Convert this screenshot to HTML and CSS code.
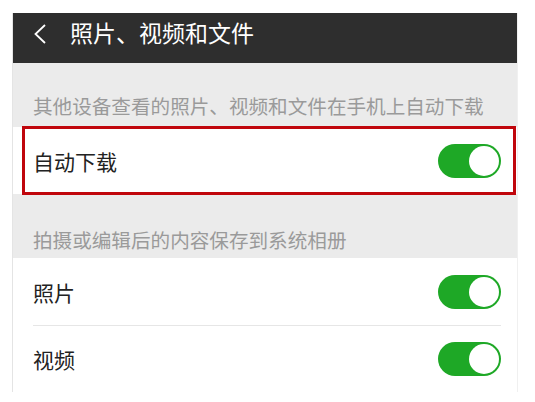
FILE: index.html
```html
<!DOCTYPE html>
<html lang="zh-CN">
<head>
    <meta charset="UTF-8">
    <title>照片、视频和文件</title>
    <link rel="stylesheet" href="styles.css">
</head>
<body>
<div class="screen">
    <div class="header">
        <span class="back">
            <svg width="14" height="20" viewBox="0 0 14 20">
                <polyline points="12,1 2.5,10 12,19" fill="none" stroke="#fff" stroke-width="1.8"/>
            </svg>
        </span>
        <span class="title">照片、视频和文件</span>
    </div>

    <div class="section-tip">其他设备查看的照片、视频和文件在手机上自动下载</div>
    <div class="row row-mark">
        <span class="row-name">自动下载</span>
        <span class="switch"><i></i></span>
    </div>

    <div class="section-tip tip-low">拍摄或编辑后的内容保存到系统相册</div>
    <div class="group">
        <div class="row">
            <span class="row-name">照片</span>
            <span class="switch"><i></i></span>
        </div>
        <div class="line"></div>
        <div class="row row-last">
            <span class="row-name">视频</span>
            <span class="switch"><i></i></span>
        </div>
    </div>
</div>
</body>
</html>
```

FILE: styles.css
```css
body {
    margin: 0;
    background: #fff;
    font-family: "Noto Sans CJK SC", "Noto Sans", sans-serif;
}

.screen {
    width: 504px;
    margin: 13px 0 0 13px;
    box-shadow: -1px 0 0 #e4e4e4, 1px 0 0 #f0f0f0;
}

.header {
    height: 50px;
    box-sizing: border-box;
    padding-top: 5px;
    background-color: #2e2e2e;
    display: flex;
    align-items: flex-start;
    color: #fff;
}

.back {
    display: flex;
    margin: 6px 23px 0 20px;
}

.title {
    font-size: 23px;
    line-height: 28px;
}

.section-tip {
    height: 64px;
    box-sizing: border-box;
    background-color: #ebebeb;
    color: #9a9a9a;
    font-size: 19.6px;
    line-height: 22px;
    padding: 0 0 10px 20px;
    display: flex;
    align-items: flex-end;
}

.tip-low {
    padding-bottom: 7px;
}

.row {
    position: relative;
    height: 67px;
    display: flex;
    align-items: center;
    justify-content: space-between;
    padding: 0 16px 0 20px;
    background: #fff;
}

.row-last {
    height: 66px;
}

.row-name {
    font-size: 21px;
    color: #222;
}

/* 红框标注 */
.row-mark::after {
    content: "";
    position: absolute;
    left: 9px;
    right: 1px;
    top: -1px;
    bottom: -1px;
    border: 3px solid #c0060c;
}

.line {
    height: 1px;
    margin: 0 16px 0 20px;
    background-color: #e6e6e6;
}

.switch {
    width: 63px;
    height: 34px;
    border-radius: 17px;
    background-color: #1ea826;
    position: relative;
}

.switch i {
    position: absolute;
    right: 2px;
    top: 2px;
    width: 30px;
    height: 30px;
    border-radius: 50%;
    background: #fff;
}
```
